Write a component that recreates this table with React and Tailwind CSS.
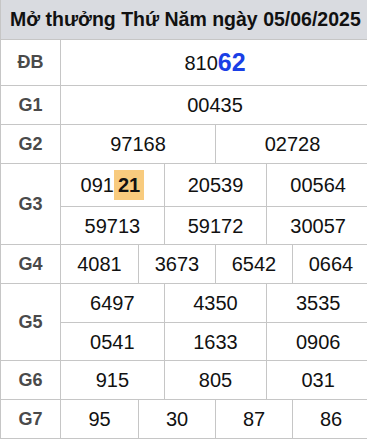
import React from 'react';

const rows = [
  { label: 'G1', lines: [['00435']] },
  { label: 'G2', lines: [['97168', '02728']] },
  { label: 'G3', lines: [['09121', '20539', '00564'], ['59713', '59172', '30057']], tall: true },
  { label: 'G4', lines: [['4081', '3673', '6542', '0664']] },
  { label: 'G5', lines: [['6497', '4350', '3535'], ['0541', '1633', '0906']] },
  { label: 'G6', lines: [['915', '805', '031']] },
  { label: 'G7', lines: [['95', '30', '87', '86']] }
];

const gridCols = {
  1: 'grid-cols-1',
  2: 'grid-cols-2',
  3: 'grid-cols-3',
  4: 'grid-cols-4'
};

const NumberCell = ({ value }) => {
  if (value === '09121') {
    return (
      <span className="flex items-center">
        <span>091</span>
        <span className="px-[4px] h-[30px] flex items-center bg-[#f8cb7e] font-bold">21</span>
      </span>
    );
  }
  return <span>{value}</span>;
};

export default function App() {
  return (
    <div className="w-[367px] h-[440px] overflow-hidden bg-white font-['Liberation_Sans',Arial,sans-serif]">
      <div className="w-[369px] border-l border-[#c6c6c6]">
        <div className="h-[40px] bg-[#d9dbe0] border-b border-[#c6c6c6] flex items-center pl-[9px] text-[19.5px] font-bold text-[#111] whitespace-nowrap">
          Mở thưởng Thứ Năm ngày 05/06/2025
        </div>

        <div className="flex h-[46px] border-b border-[#c6c6c6]">
          <div className="w-[60px] shrink-0 border-r border-[#c6c6c6] flex items-center justify-center text-[18px] font-bold text-[#4a4a4a]">
            ĐB
          </div>
          <div className="flex-1 flex items-center justify-center text-[20px] text-[#111]">
            <span>810</span>
            <span className="text-[25px] font-bold text-[#1a3fe6]">62</span>
          </div>
        </div>

        {rows.map((row) => (
          <div key={row.label} className="flex border-b border-[#c6c6c6]">
            <div className="w-[60px] shrink-0 border-r border-[#c6c6c6] flex items-center justify-center text-[18px] font-bold text-[#4a4a4a]">
              {row.label}
            </div>
            <div className="flex-1 flex flex-col">
              {row.lines.map((line, i) => (
                <div
                  key={i}
                  className={`grid ${gridCols[line.length]} ${i > 0 ? 'border-t border-[#c6c6c6]' : ''} ${row.tall && i === 0 ? 'h-[42px]' : 'h-[38px]'}`}
                >
                  {line.map((num, j) => (
                    <div
                      key={j}
                      className={`flex items-center justify-center text-[20px] text-[#111] ${j > 0 ? 'border-l border-[#c6c6c6]' : ''}`}
                    >
                      <NumberCell value={num} />
                    </div>
                  ))}
                </div>
              ))}
            </div>
          </div>
        ))}
      </div>
    </div>
  );
}
